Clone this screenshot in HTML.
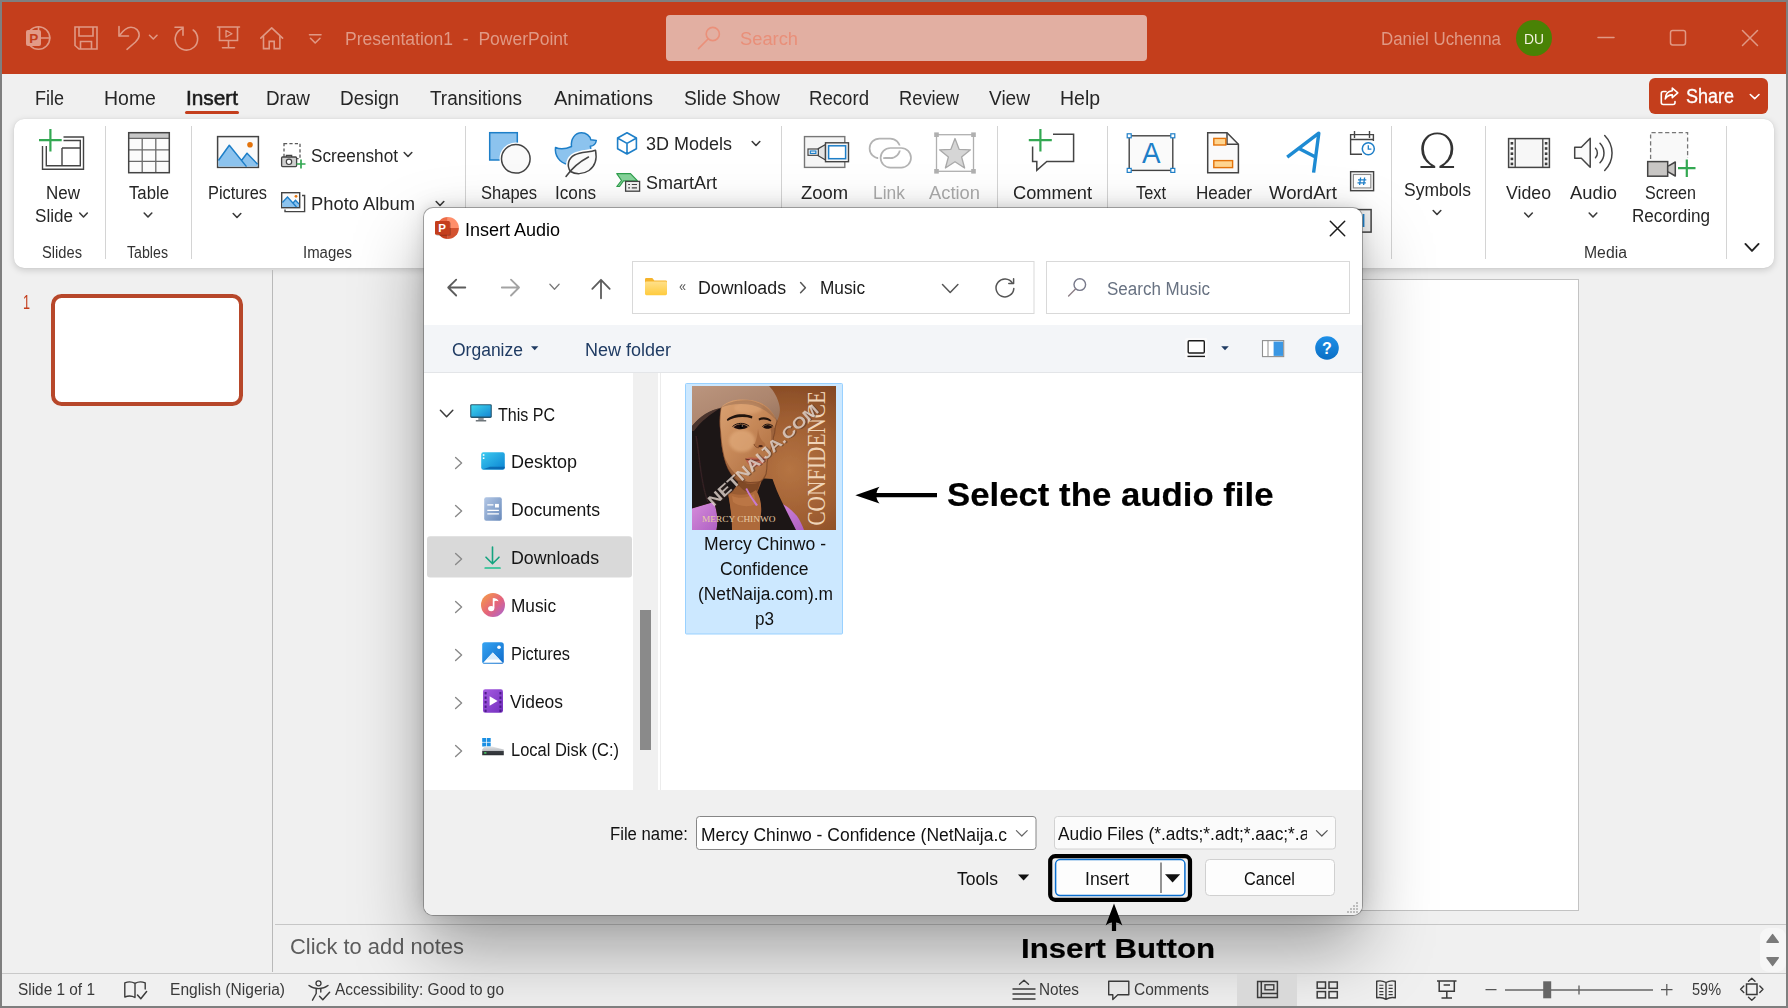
<!DOCTYPE html>
<html lang="en"><head><meta charset="utf-8"><title>Insert Audio - PowerPoint</title>
<style>
html,body{margin:0;padding:0;}
body{width:1788px;height:1008px;overflow:hidden;background:#f0f0f0;font-family:"Liberation Sans",sans-serif;}
#app{position:relative;width:1788px;height:1008px;overflow:hidden;background:#f0f0f0;}
#app div,#app span,#app svg{position:absolute;}
.t{white-space:pre;line-height:1;transform-origin:0 0;display:block;}
svg{overflow:visible;}
.sep{width:1px;background:#d4d4d4;}

</style></head>
<body>
<div id="app">
<div id="titlebar" style="left:0;top:0;width:1788px;height:74px;background:#C43E1C"></div>
<svg id="tb-icons" style="left:0;top:0" width="700" height="74" viewBox="0 0 700 74" fill="none" stroke="#E09985" stroke-width="1.6" stroke-linecap="round" stroke-linejoin="round">
<circle cx="38.5" cy="38" r="11.3"/><path d="M38.5 26.7V38H49.8"/>
<rect x="26" y="30" width="15" height="16" rx="2" fill="#E29A87" stroke="none"/>
<text x="29.3" y="43.2" font-family="Liberation Sans, sans-serif" font-weight="700" font-size="13.5" fill="#C43E1C" stroke="none">P</text>
<path d="M75 27H97V49H79L75 45.5Z M79 27.5V36H93V27.5 M80.5 49V41.5H91.5V49" stroke-linejoin="miter"/>
<path d="M119 26.5V36H128.5" stroke-linejoin="miter"/><path d="M119.5 35.5C123 30.5 127 27.2 131 27.2C136 27.2 139.2 31 139.2 35C139.2 38 137.5 40 135.5 42L127 49.3"/>
<path d="M149.5 35.3L153.3 39L157 35.3"/>
<path d="M175 27.2H183V35.2" stroke-linejoin="miter"/><path d="M182.6 28.4A11.2 11.2 0 1 0 193.2 30"/>
<path d="M217.5 27H239.5 M219.5 27.5V40.5H237.5V27.5 M228.5 40.5V47.5 M222.5 47.8H234.5" stroke-linejoin="miter"/><path d="M226 30.5V37L232 33.7Z" stroke-width="1.3"/>
<path d="M260.8 38.2L271.7 27.8L282.6 38.2"/><path d="M263.5 36.5V48.6H269.2V41.4H274.2V48.6H279.9V36.5" stroke-linejoin="miter"/>
<path d="M309.5 34.7H321 M310.5 38.3L315.2 43L320 38.3"/>
</svg>
<span class="t" style="left:345.00px;top:29.76px;font-size:18px;color:#E09985;transform:scaleX(0.9732);">Presentation1  -  PowerPoint</span>
<div id="search" style="left:666px;top:14.5px;width:481px;height:46.5px;background:#E2AFA2;border-radius:4px"></div>
<svg style="left:690px;top:20px" width="40" height="40" viewBox="690 20 40 40" fill="none" stroke="#EA907A" stroke-width="1.6" stroke-linecap="round"><circle cx="712.8" cy="34" r="6.6"/><path d="M708 39L698.5 48.6"/></svg>
<span class="t" style="left:740.00px;top:29.76px;font-size:18px;color:#E98F79;transform:scaleX(1.0165);">Search</span>
<span class="t" style="left:1381.00px;top:29.76px;font-size:18px;color:#E09985;transform:scaleX(0.9363);">Daniel Uchenna</span>
<div id="avatar" style="left:1516px;top:20px;width:36px;height:36px;border-radius:50%;background:#498205"></div>
<span class="t" style="left:1524.00px;top:30.88px;font-size:15.5px;color:#F3F2E0;transform:scaleX(0.8930);">DU</span>
<svg id="winctl" style="left:1580px;top:0" width="200" height="74" viewBox="1580 0 200 74" fill="none" stroke="#E09985" stroke-width="1.5" stroke-linecap="round">
<path d="M1598 37.5H1614"/><rect x="1670.5" y="30.5" width="15" height="14.5" rx="2.2"/><path d="M1742.5 30.5L1757.5 45.5M1757.5 30.5L1742.5 45.5"/></svg>
<span class="t" style="left:35.00px;top:88.07px;font-size:20px;color:#262626;transform:scaleX(0.9006);">File</span>
<span class="t" style="left:104.00px;top:88.07px;font-size:20px;color:#262626;transform:scaleX(0.9738);">Home</span>
<span class="t" style="left:266.00px;top:88.07px;font-size:20px;color:#262626;transform:scaleX(0.9422);">Draw</span>
<span class="t" style="left:340.00px;top:88.07px;font-size:20px;color:#262626;transform:scaleX(0.9470);">Design</span>
<span class="t" style="left:430.00px;top:88.07px;font-size:20px;color:#262626;transform:scaleX(0.9475);">Transitions</span>
<span class="t" style="left:554.00px;top:88.07px;font-size:20px;color:#262626;transform:scaleX(1.0010);">Animations</span>
<span class="t" style="left:684.00px;top:88.07px;font-size:20px;color:#262626;transform:scaleX(0.9590);">Slide Show</span>
<span class="t" style="left:809.00px;top:88.07px;font-size:20px;color:#262626;transform:scaleX(0.9302);">Record</span>
<span class="t" style="left:899.00px;top:88.07px;font-size:20px;color:#262626;transform:scaleX(0.9146);">Review</span>
<span class="t" style="left:989.00px;top:88.07px;font-size:20px;color:#262626;transform:scaleX(0.9535);">View</span>
<span class="t" style="left:1060.00px;top:88.07px;font-size:20px;color:#262626;transform:scaleX(0.9732);">Help</span>
<span class="t" style="left:186.00px;top:88.07px;font-size:20px;color:#1a1a1a;transform:scaleX(1.0400);-webkit-text-stroke:0.55px #1a1a1a;">Insert</span>
<div style="left:185px;top:110.5px;width:54px;height:3px;border-radius:1.5px;background:#C43E1C"></div>
<div id="share" style="left:1649px;top:78px;width:119px;height:36px;border-radius:6px;background:#C43E1C"></div>
<svg style="left:1655px;top:82px" width="30" height="30" viewBox="1655 82 30 30" fill="none" stroke="#fff" stroke-width="1.6" stroke-linecap="round" stroke-linejoin="round">
<path d="M1666 91.5H1663.3A2 2 0 0 0 1661.3 93.5V102.5A2 2 0 0 0 1663.3 104.5H1673A2 2 0 0 0 1675 102.5V101.5"/>
<path d="M1672.3 88L1677.8 92.8L1672.3 97.6V94.9C1668.6 94.9 1666.6 96.3 1665.3 99C1665.5 94.2 1668.3 91 1672.3 90.7Z"/></svg>
<span class="t" style="left:1686.00px;top:86.07px;font-size:20px;color:#ffffff;transform:scaleX(0.8989);-webkit-text-stroke:0.3px #fff;">Share</span>
<svg style="left:1748px;top:92px" width="14" height="10" viewBox="1748 92 14 10" fill="none" stroke="#fff" stroke-width="1.6" stroke-linecap="round" stroke-linejoin="round"><path d="M1750.3 94.5L1754.7 98.7L1759 94.5"/></svg>
<div id="ribbon" style="left:14px;top:118.5px;width:1760px;height:149.5px;border-radius:10px;background:#fff;box-shadow:0 2px 7px rgba(0,0,0,.17),0 0 1px rgba(0,0,0,.12)"></div>
<div style="left:272px;top:270px;width:1px;height:702px;background:#b9b9b9"></div>
<span class="t" style="left:22.50px;top:293.49px;font-size:19.5px;color:#C43E1C;transform:scaleX(0.6468);">1</span>
<div id="thumb" style="left:51px;top:293.5px;width:192px;height:112px;box-sizing:border-box;border:4.2px solid #B7472A;border-radius:10.5px;background:#fff"></div>
<div id="slide" style="left:456px;top:280px;width:1122px;height:630px;background:#fff;outline:1px solid #c3c3c3"></div>
<div style="left:275px;top:924px;width:1511px;height:1px;background:#c6c6c6"></div>
<span class="t" style="left:290.00px;top:936.38px;font-size:22px;color:#5d5d5d;transform:scaleX(0.9949);">Click to add notes</span>
<div style="left:1760px;top:928px;width:26px;height:44px;border-radius:9px;background:#f6f6f6"></div>
<svg style="left:1760px;top:928px" width="26" height="44" viewBox="1760 928 26 44" fill="#7a7a7a" stroke="#7a7a7a" stroke-width="1.5" stroke-linejoin="round"><path d="M1767 942.3L1772.6 934.6L1778.2 942.3Z"/><path d="M1767 957.7L1772.6 965.4L1778.2 957.7Z"/></svg>
<div class="sep" style="left:105px;top:126px;height:133px"></div>
<div class="sep" style="left:191px;top:126px;height:133px"></div>
<div class="sep" style="left:465px;top:126px;height:133px"></div>
<div class="sep" style="left:781px;top:126px;height:133px"></div>
<div class="sep" style="left:997px;top:126px;height:133px"></div>
<div class="sep" style="left:1107px;top:126px;height:133px"></div>
<div class="sep" style="left:1391px;top:126px;height:133px"></div>
<div class="sep" style="left:1485px;top:126px;height:133px"></div>
<div class="sep" style="left:1726px;top:126px;height:133px"></div>
<span class="t" style="left:46.00px;top:183.76px;font-size:18px;color:#262626;transform:scaleX(0.9421);">New</span>
<span class="t" style="left:35.00px;top:206.76px;font-size:18px;color:#262626;transform:scaleX(0.9488);">Slide</span>
<span class="t" style="left:129.00px;top:183.76px;font-size:18px;color:#262626;transform:scaleX(0.9298);">Table</span>
<span class="t" style="left:208.00px;top:183.76px;font-size:18px;color:#262626;transform:scaleX(0.9080);">Pictures</span>
<span class="t" style="left:311.00px;top:146.76px;font-size:18px;color:#262626;transform:scaleX(0.9552);">Screenshot</span>
<span class="t" style="left:311.00px;top:194.76px;font-size:18px;color:#262626;transform:scaleX(1.0190);">Photo Album</span>
<span class="t" style="left:481.00px;top:183.76px;font-size:18px;color:#262626;transform:scaleX(0.9177);">Shapes</span>
<span class="t" style="left:555.00px;top:183.76px;font-size:18px;color:#262626;transform:scaleX(0.9530);">Icons</span>
<span class="t" style="left:646.00px;top:134.76px;font-size:18px;color:#262626;transform:scaleX(0.9995);">3D Models</span>
<span class="t" style="left:646.00px;top:173.76px;font-size:18px;color:#262626;transform:scaleX(0.9999);">SmartArt</span>
<span class="t" style="left:801.00px;top:183.76px;font-size:18px;color:#262626;transform:scaleX(1.0220);">Zoom</span>
<span class="t" style="left:1013.00px;top:183.76px;font-size:18px;color:#262626;transform:scaleX(1.0124);">Comment</span>
<span class="t" style="left:1136.00px;top:183.76px;font-size:18px;color:#262626;transform:scaleX(0.9083);">Text</span>
<span class="t" style="left:1196.00px;top:183.76px;font-size:18px;color:#262626;transform:scaleX(0.9485);">Header</span>
<span class="t" style="left:1269.00px;top:183.76px;font-size:18px;color:#262626;transform:scaleX(1.0350);">WordArt</span>
<span class="t" style="left:1404.00px;top:180.76px;font-size:18px;color:#262626;transform:scaleX(0.9706);">Symbols</span>
<span class="t" style="left:1506.00px;top:183.76px;font-size:18px;color:#262626;transform:scaleX(0.9843);">Video</span>
<span class="t" style="left:1570.00px;top:183.76px;font-size:18px;color:#262626;transform:scaleX(1.0200);">Audio</span>
<span class="t" style="left:1645.00px;top:183.76px;font-size:18px;color:#262626;transform:scaleX(0.8938);">Screen</span>
<span class="t" style="left:1632.00px;top:206.76px;font-size:18px;color:#262626;transform:scaleX(0.9503);">Recording</span>
<span class="t" style="left:873.00px;top:183.76px;font-size:18px;color:#ababab;transform:scaleX(0.9662);">Link</span>
<span class="t" style="left:929.00px;top:183.76px;font-size:18px;color:#ababab;transform:scaleX(1.0192);">Action</span>
<span class="t" style="left:42.00px;top:245.46px;font-size:16px;color:#333;transform:scaleX(0.9174);">Slides</span>
<span class="t" style="left:127.00px;top:245.46px;font-size:16px;color:#333;transform:scaleX(0.8867);">Tables</span>
<span class="t" style="left:303.00px;top:245.46px;font-size:16px;color:#333;transform:scaleX(0.9337);">Images</span>
<span class="t" style="left:1584.00px;top:245.46px;font-size:16px;color:#333;transform:scaleX(0.9844);">Media</span>
<svg id="ribbon-icons" style="left:0;top:0" width="1788" height="280" viewBox="0 0 1788 280"><path d="M79.7 213.0L83.5 217.0L87.3 213.0" stroke="#3b3b3b" stroke-width="1.6" fill="none" stroke-linecap="round" stroke-linejoin="round"/>
<path d="M144.2 213.0L148 217.0L151.8 213.0" stroke="#3b3b3b" stroke-width="1.6" fill="none" stroke-linecap="round" stroke-linejoin="round"/>
<path d="M233.2 213.5L237 217.5L240.8 213.5" stroke="#3b3b3b" stroke-width="1.6" fill="none" stroke-linecap="round" stroke-linejoin="round"/>
<path d="M404.2 152.5L408 156.5L411.8 152.5" stroke="#3b3b3b" stroke-width="1.6" fill="none" stroke-linecap="round" stroke-linejoin="round"/>
<path d="M436.2 201.5L440 205.5L443.8 201.5" stroke="#3b3b3b" stroke-width="1.6" fill="none" stroke-linecap="round" stroke-linejoin="round"/>
<path d="M752.2 141.5L756 145.5L759.8 141.5" stroke="#3b3b3b" stroke-width="1.6" fill="none" stroke-linecap="round" stroke-linejoin="round"/>
<path d="M1433.2 210.5L1437 214.5L1440.8 210.5" stroke="#3b3b3b" stroke-width="1.6" fill="none" stroke-linecap="round" stroke-linejoin="round"/>
<path d="M1524.7 213.0L1528.5 217.0L1532.3 213.0" stroke="#3b3b3b" stroke-width="1.6" fill="none" stroke-linecap="round" stroke-linejoin="round"/>
<path d="M1589.2 213.0L1593 217.0L1596.8 213.0" stroke="#3b3b3b" stroke-width="1.6" fill="none" stroke-linecap="round" stroke-linejoin="round"/>
<path d="M1745.4 243.9L1752 250.9L1758.6 243.9" stroke="#222" stroke-width="1.9" fill="none" stroke-linecap="round" stroke-linejoin="round"/>
<path d="M63.5 137H83.5V169.3H42.5V146" stroke="#444" stroke-width="1.4" fill="none"/><path d="M63.5 140.5H80.3V165.8H46.3V146 M62 148H80.3 M62 148V165.8" stroke="#444" stroke-width="1.4" fill="none"/><path d="M50.4 129V151.6M39 140.2H61.7" stroke="#33A852" stroke-width="2.2" fill="none"/>
<rect x="128.7" y="132.7" width="40.6" height="40" fill="#fbfbfb" stroke="none"/><rect x="128.7" y="132.7" width="40.6" height="5.6" fill="#c8c8c8"/><path d="M128.7 138.3H169.3M128.7 149.8H169.3M128.7 161.3H169.3M142.2 138.3V172.7M155.8 138.3V172.7" stroke="#6a6a6a" stroke-width="1.3" fill="none"/><rect x="128.7" y="132.7" width="40.6" height="40" fill="none" stroke="#444" stroke-width="1.5"/>
<rect x="217.6" y="136.6" width="40.8" height="30.8" fill="#fafafa" stroke="#444" stroke-width="1.5"/><path d="M218.4 166.6V160.5L229.3 145.3L241.5 160.5L247 153.2L257.6 164.2V166.6Z" fill="#8CC3EE" stroke="none"/><path d="M218.4 160.5L229.3 145.3L246.5 166.6M241.7 160.2L247 153.2L257.6 164.2" fill="none" stroke="#1E7FC8" stroke-width="1.5" stroke-linejoin="round"/><circle cx="250" cy="144.7" r="2.8" fill="#E3730B"/>
<rect x="284" y="143.6" width="16" height="15" fill="none" stroke="#5a5a5a" stroke-width="1.3" stroke-dasharray="3.2 2.2"/><path d="M286.3 157V155.3H291.7V157" fill="#cfcfcf" stroke="#444" stroke-width="1.2"/><rect x="281.6" y="157" width="15" height="9.6" rx="1" fill="#cfcfcf" stroke="#444" stroke-width="1.3"/><circle cx="289" cy="161.8" r="2.7" fill="#fff" stroke="#444" stroke-width="1.2"/><path d="M301 159.5V168.5M296.5 164H305.5" stroke="#33A852" stroke-width="1.7" fill="none"/>
<path d="M302 195.5H304.6V211.6H285V209.5" fill="none" stroke="#444" stroke-width="1.4"/><rect x="281.7" y="192.7" width="18" height="15" fill="#fafafa" stroke="#444" stroke-width="1.4"/><path d="M282.4 207V202.5L287.5 197L293 203L295.5 200.3L299 204V207Z" fill="#8CC3EE"/><path d="M282.4 202.5L287.5 197L296.5 207M293 203L295.5 200.3L299 204" fill="none" stroke="#1E7FC8" stroke-width="1.3"/><circle cx="296" cy="196.3" r="1.4" fill="#E3730B"/>
<rect x="489.7" y="132.7" width="27.6" height="27.3" fill="#8CC3EE" stroke="#1E7FC8" stroke-width="1.5"/><circle cx="515.8" cy="158.8" r="16.3" fill="#fff"/><circle cx="515.8" cy="158.8" r="14.3" fill="#fafafa" stroke="#444" stroke-width="1.5"/>
<path d="M555.5 147.5C560 149.5 566 149 571.5 146.5C570.5 139 575 132.8 581.5 132.8C586.5 132.8 590 136 590.8 139.8L596.3 140.5C595.8 144 593 146 590.3 146.3C591.5 150 591.5 154 589 158C585 164.5 576 166 568 164.5C559 162.5 554.5 155 555.5 147.5Z" fill="#8CC3EE" stroke="#1E7FC8" stroke-width="1.5" stroke-linejoin="round"/><path d="M570.5 171.5C566.5 166 568 158.5 574.5 155C581 151.5 589 152.5 595.5 150.2C597 158 595.5 166 589 170.5C583 174.5 575.5 174.5 570.5 171.5Z" fill="#fafafa" stroke="#fff" stroke-width="4.5"/><path d="M570.5 171.5C566.5 166 568 158.5 574.5 155C581 151.5 589 152.5 595.5 150.2C597 158 595.5 166 589 170.5C583 174.5 575.5 174.5 570.5 171.5Z" fill="#fafafa" stroke="#444" stroke-width="1.5" stroke-linejoin="round"/><path d="M566 176.5C571 169.5 579 162 588.5 157" fill="none" stroke="#444" stroke-width="1.5" stroke-linecap="round"/>
<path d="M627 132.7L636.4 138V148.7L627 154L617.6 148.7V138Z M617.9 138.2L627 143.4L636.1 138.2M627 143.4V153.7" fill="none" stroke="#1E7FC8" stroke-width="1.6" stroke-linejoin="round"/>
<path d="M616.8 173.6H630.5L637.5 180.8H623.5L619.5 186.5L616.8 186.5L621.5 180.5Z" fill="#86D39A" stroke="#2F9E4D" stroke-width="1.2" stroke-linejoin="round"/><rect x="625.6" y="181.4" width="14" height="9.8" fill="#f1f1f1" stroke="#444" stroke-width="1.3"/><path d="M628.2 184.5H630M631.8 184.5H637M628.2 187.8H630M631.8 187.8H637" stroke="#444" stroke-width="1.2"/>
<rect x="804.5" y="136.6" width="40.3" height="30.8" fill="#f5f5f5" stroke="#777" stroke-width="1.4"/><path d="M818.3 148.6L825.5 144.5V160L818.3 155.8Z" fill="#e4e4e4" stroke="#444" stroke-width="1.3" stroke-linejoin="round"/><rect x="808" y="149" width="10.3" height="6.3" fill="#fff" stroke="#444" stroke-width="1.2"/><rect x="810.3" y="151" width="5.6" height="2.4" fill="#fff" stroke="#1E7FC8" stroke-width="1.2"/><rect x="825.5" y="142.8" width="23" height="18.9" fill="#f5f5f5" stroke="#444" stroke-width="1.4"/><rect x="828.6" y="145.8" width="17" height="12.9" fill="#fff" stroke="#1E7FC8" stroke-width="1.5"/>
<rect x="869.6" y="138.6" width="30.4" height="19.6" rx="9.8" fill="none" stroke="#b3b3b3" stroke-width="1.7"/><rect x="880.6" y="148" width="30.4" height="19.6" rx="9.8" fill="none" stroke="#fff" stroke-width="5"/><rect x="880.6" y="148" width="30.4" height="19.6" rx="9.8" fill="none" stroke="#b3b3b3" stroke-width="1.7"/><path d="M884.5 157.8H890.5" stroke="#b3b3b3" stroke-width="1.5"/>
<rect x="936.5" y="134.7" width="37" height="36.6" fill="none" stroke="#b0b0b0" stroke-width="1.3"/><rect x="934.2" y="132.4" width="4.6" height="4.6" fill="#b0b0b0"/><rect x="934.2" y="169" width="4.6" height="4.6" fill="#b0b0b0"/><rect x="971.2" y="132.4" width="4.6" height="4.6" fill="#b0b0b0"/><rect x="971.2" y="169" width="4.6" height="4.6" fill="#b0b0b0"/><path d="M955 138.5L959.1 149.3L970.5 149.8L961.6 157L964.6 168L955 161.7L945.4 168L948.4 157L939.5 149.8L950.9 149.3Z" fill="#d6d6d6" stroke="#a9a9a9" stroke-width="1.3" stroke-linejoin="round"/>
<path d="M1053 134.2H1073.6V161.5H1046.8L1036.8 170.3V161.5H1032.6V146.5" fill="none" stroke="#444" stroke-width="1.5" stroke-linejoin="miter"/><path d="M1040.4 129V151.5M1028.8 140.2H1051.8" stroke="#33A852" stroke-width="2.2" fill="none"/>
<rect x="1129.2" y="135.8" width="43.6" height="34.6" fill="#fafafa" stroke="#444" stroke-width="1.4"/><rect x="1127.2" y="133.8" width="4" height="4" fill="#fff" stroke="#1E7FC8" stroke-width="1.2"/><rect x="1127.2" y="168.4" width="4" height="4" fill="#fff" stroke="#1E7FC8" stroke-width="1.2"/><rect x="1170.8" y="133.8" width="4" height="4" fill="#fff" stroke="#1E7FC8" stroke-width="1.2"/><rect x="1170.8" y="168.4" width="4" height="4" fill="#fff" stroke="#1E7FC8" stroke-width="1.2"/><text x="1151.2" y="163.4" text-anchor="middle" font-family="Liberation Sans, sans-serif" font-size="29" fill="#1E7FC8" textLength="18.5" lengthAdjust="spacingAndGlyphs">A</text>
<path d="M1207.7 132.8H1227L1238.4 144.2V172.8H1207.7Z" fill="#fafafa" stroke="#444" stroke-width="1.5" stroke-linejoin="miter"/><path d="M1227 132.8V144.2H1238.4" fill="none" stroke="#444" stroke-width="1.5"/><rect x="1213.8" y="138.4" width="12" height="6.6" fill="#FFD590" stroke="#E3730B" stroke-width="1.4"/><rect x="1213.8" y="160.6" width="18.8" height="7" fill="#FFD590" stroke="#E3730B" stroke-width="1.4"/>
<path d="M1287.2 157.2L1318.8 133.2L1313.6 172.6M1298.5 148.3L1315.5 157" fill="none" stroke="#1E8BD3" stroke-width="3.4" stroke-linejoin="round" stroke-linecap="butt"/>
<path d="M1362 154.3H1350.6V134.6H1373.4V141 M1354.5 131V138M1369.5 131V138 M1350.6 139.5H1373.4" fill="none" stroke="#444" stroke-width="1.4"/><circle cx="1368.3" cy="148.8" r="6" fill="#fff" stroke="#1E7FC8" stroke-width="1.5"/><path d="M1368.3 145.3V149.2H1371.4" fill="none" stroke="#1E7FC8" stroke-width="1.3"/>
<rect x="1350.6" y="171.7" width="23" height="19" fill="#f3f3f3" stroke="#444" stroke-width="1.4"/><rect x="1353.4" y="174.5" width="17.4" height="13.4" fill="#fff" stroke="#8a8a8a" stroke-width="1.1"/><path d="M1360.6 177.5L1359.6 185M1364.6 177.5L1363.6 185M1358 179.8H1366.3M1357.5 182.8H1365.8" stroke="#1E7FC8" stroke-width="1.3" fill="none"/>
<rect x="1350.6" y="209.6" width="20.5" height="22.5" fill="#f3f3f3" stroke="#444" stroke-width="1.5"/><path d="M1363.5 214V227" stroke="#1E7FC8" stroke-width="1.8"/>
<text x="1437.2" y="167.6" text-anchor="middle" font-family="DejaVu Sans, Liberation Sans, sans-serif" font-weight="200" font-size="48" fill="#333" textLength="39.5" lengthAdjust="spacingAndGlyphs">Ω</text>
<rect x="1508.6" y="138.6" width="40.8" height="28.8" fill="#f7f7f7" stroke="#444" stroke-width="1.5"/><path d="M1515.2 138.6V167.4M1542.8 138.6V167.4" stroke="#444" stroke-width="1.3"/><rect x="1510.6" y="142" width="2.6" height="2.6" fill="#3d3d3d"/><rect x="1510.6" y="147.2" width="2.6" height="2.6" fill="#3d3d3d"/><rect x="1510.6" y="152.4" width="2.6" height="2.6" fill="#3d3d3d"/><rect x="1510.6" y="157.6" width="2.6" height="2.6" fill="#3d3d3d"/><rect x="1510.6" y="162.6" width="2.6" height="2.6" fill="#3d3d3d"/><rect x="1544.8" y="142" width="2.6" height="2.6" fill="#3d3d3d"/><rect x="1544.8" y="147.2" width="2.6" height="2.6" fill="#3d3d3d"/><rect x="1544.8" y="152.4" width="2.6" height="2.6" fill="#3d3d3d"/><rect x="1544.8" y="157.6" width="2.6" height="2.6" fill="#3d3d3d"/><rect x="1544.8" y="162.6" width="2.6" height="2.6" fill="#3d3d3d"/>
<path d="M1574.7 147.3H1581.3L1590.2 138.2V167.2L1581.3 158.3H1574.7Z" fill="#fafafa" stroke="#444" stroke-width="1.5" stroke-linejoin="round"/><path d="M1595.5 148.3C1598 150.8 1598 155.2 1595.5 157.7 M1600 143.2C1605.3 148.8 1605.3 157.2 1600 162.8 M1604.7 135.5C1614.5 145.5 1614.5 160.5 1604.7 170.5" fill="none" stroke="#444" stroke-width="1.5" stroke-linecap="round"/>
<rect x="1650.6" y="132.7" width="37" height="30" fill="#f9f9f9" stroke="none"/><path d="M1650.6 159V132.7H1687.6V158" fill="none" stroke="#777" stroke-width="1.3" stroke-dasharray="4.2 2.6"/><rect x="1647.7" y="161.6" width="20" height="14.6" fill="#c8c6c4" stroke="#444" stroke-width="1.5"/><path d="M1667.7 166.3L1675.3 162V176L1667.7 171.7Z" fill="#c8c6c4" stroke="#444" stroke-width="1.5" stroke-linejoin="round"/><path d="M1686.8 159.5V177M1678 168.2H1695.5" stroke="#33A852" stroke-width="2.2" fill="none"/></svg>
<div id="dialog" style="left:424px;top:207.5px;width:938px;height:707px;border-radius:9px;background:#fff;overflow:hidden;
box-shadow:0 0 0 1px rgba(90,90,90,.5),0 34px 70px rgba(0,0,0,.34),0 0 24px rgba(0,0,0,.12),0 -3px 10px rgba(0,0,0,.06)">
<div style="left:0;top:117.5px;width:938px;height:47px;background:#F3F5F8;border-bottom:1px solid #E3E5E8"></div>
<div style="left:209px;top:165.5px;width:24.5px;height:417px;background:#F0F0F0"></div>
<div style="left:235.5px;top:165.5px;width:1px;height:417px;background:#ECECEC"></div>
<div style="left:0;top:582px;width:938px;height:125px;background:#F0F0F0"></div>
</div>
<svg id="dlg-art" style="left:0;top:0" width="1788" height="1008" viewBox="0 0 1788 1008"><defs></defs><clipPath id="ppc"><circle cx="447.8" cy="228" r="11.1"/></clipPath><g clip-path="url(#ppc)"><rect x="436" y="216" width="11.8" height="12" fill="#ED6C47"/><rect x="447.8" y="216" width="12" height="12" fill="#FF8F6B"/><rect x="447.8" y="228" width="12" height="12" fill="#D35230"/><rect x="436" y="228" width="11.8" height="12" fill="#C43E1C"/></g><rect x="436.2" y="222.2" width="14.6" height="13.6" rx="1.3" fill="#000" opacity=".22"/><rect x="435" y="221" width="14.8" height="13.8" rx="1.3" fill="#C43E1C"/><text x="438.3" y="232.3" font-family="Liberation Sans, sans-serif" font-weight="700" font-size="11.5" fill="#fff">P</text>
<path d="M1330.3 221.3L1344.7 235.7M1344.7 221.3L1330.3 235.7" stroke="#1b1b1b" stroke-width="1.5" stroke-linecap="round"/>
<path d="M465.3 287.5H448.3M456.2 279.6L448.2 287.5L456.2 295.5" fill="none" stroke="#5c5c5c" stroke-width="1.8" stroke-linecap="round" stroke-linejoin="round"/>
<path d="M501.8 287.5H518.8M511 279.6L519 287.5L511 295.5" fill="none" stroke="#a3a3a3" stroke-width="1.8" stroke-linecap="round" stroke-linejoin="round"/>
<path d="M549.9 284.3L554.5 289.2L559.1 284.3" fill="none" stroke="#7a7a7a" stroke-width="1.3" stroke-linecap="round" stroke-linejoin="round"/>
<path d="M601 298.3V280M592.3 288.8L601 279.8L609.7 288.8" fill="none" stroke="#5c5c5c" stroke-width="1.8" stroke-linecap="round" stroke-linejoin="round"/>
<rect x="632.5" y="261.5" width="401.5" height="52" fill="#fff" stroke="#D9D9D9" stroke-width="1"/>
<rect x="1046.5" y="261.5" width="303" height="52" fill="#fff" stroke="#D9D9D9" stroke-width="1"/>
<linearGradient id="fg" x1="0" y1="0" x2="0" y2="1"><stop offset="0" stop-color="#FFE08A"/><stop offset="1" stop-color="#FFCB3D"/></linearGradient><path d="M645 279.3A1.3 1.3 0 0 1 646.3 278H652.3L654.3 280.5H665.7A1.3 1.3 0 0 1 667 281.8V284H645Z" fill="#F5B32B"/><rect x="645" y="281.6" width="22" height="13.6" rx="1.4" fill="url(#fg)"/>
<path d="M800.6 282.6L805.4 287.7L800.6 292.8" fill="none" stroke="#555" stroke-width="1.5" stroke-linecap="round" stroke-linejoin="round"/>
<path d="M942.5 284.5L950.2 292.5L957.9 284.5" fill="none" stroke="#555" stroke-width="1.5" stroke-linecap="round" stroke-linejoin="round"/>
<path d="M1013.8 288.6A8.9 8.9 0 1 1 1012.4 283.1" fill="none" stroke="#555" stroke-width="1.5" stroke-linecap="round"/><path d="M1013.6 278.8V283.4H1008.8" fill="none" stroke="#555" stroke-width="1.5" stroke-linecap="round" stroke-linejoin="round"/>
<circle cx="1079.8" cy="284.6" r="5.8" fill="none" stroke="#77798a" stroke-width="1.4"/><path d="M1075.5 289L1068.6 295.9" stroke="#8c7f86" stroke-width="1.4" stroke-linecap="round"/>
<path d="M531 346.2H538.4L534.7 350.3Z" fill="#1F3B63"/>
<rect x="1185" y="338" width="22.5" height="21.5" rx="2" fill="#FAFAFB"/><rect x="1188.2" y="340.7" width="16.1" height="12.3" rx="1" fill="#fff" stroke="#1b1b1b" stroke-width="1.4"/><path d="M1187.5 356.4H1205" stroke="#1b1b1b" stroke-width="1.4"/>
<path d="M1221.2 346.2H1228.8L1225 350.3Z" fill="#1F3B63"/>
<rect x="1262.5" y="340.6" width="21.2" height="16" fill="#fff" stroke="#8f8f8f" stroke-width="1.1"/><path d="M1268 340.6V356.6" stroke="#8f8f8f" stroke-width="1"/><rect x="1273.6" y="341.6" width="9.4" height="14.3" fill="#3B97E3"/>
<linearGradient id="hg" x1="0" y1="0" x2="0" y2="1"><stop offset="0" stop-color="#1E90E8"/><stop offset="1" stop-color="#0A6EC4"/></linearGradient><circle cx="1327" cy="348" r="11.8" fill="url(#hg)"/><text x="1327" y="353.8" text-anchor="middle" font-family="Liberation Sans, sans-serif" font-weight="700" font-size="16" fill="#fff">?</text>
<rect x="427" y="536.3" width="205" height="41.2" rx="3" fill="#D9D9D9"/>
<path d="M440.4 410.2L446.6 416.8L452.8 410.2" fill="none" stroke="#3c3c3c" stroke-width="1.5" stroke-linecap="round" stroke-linejoin="round"/>
<path d="M455.6 457.4L461.6 463L455.6 468.6" fill="none" stroke="#8a8a8a" stroke-width="1.4" stroke-linecap="round" stroke-linejoin="round"/>
<path d="M455.6 505.4L461.6 511L455.6 516.6" fill="none" stroke="#8a8a8a" stroke-width="1.4" stroke-linecap="round" stroke-linejoin="round"/>
<path d="M455.6 553.4L461.6 559L455.6 564.6" fill="none" stroke="#8a8a8a" stroke-width="1.4" stroke-linecap="round" stroke-linejoin="round"/>
<path d="M455.6 601.4L461.6 607L455.6 612.6" fill="none" stroke="#8a8a8a" stroke-width="1.4" stroke-linecap="round" stroke-linejoin="round"/>
<path d="M455.6 649.4L461.6 655L455.6 660.6" fill="none" stroke="#8a8a8a" stroke-width="1.4" stroke-linecap="round" stroke-linejoin="round"/>
<path d="M455.6 697.4L461.6 703L455.6 708.6" fill="none" stroke="#8a8a8a" stroke-width="1.4" stroke-linecap="round" stroke-linejoin="round"/>
<path d="M455.6 745.4L461.6 751L455.6 756.6" fill="none" stroke="#8a8a8a" stroke-width="1.4" stroke-linecap="round" stroke-linejoin="round"/>
<rect x="640" y="610" width="11" height="140" fill="#8A8A8A"/>
<linearGradient id="pcg" x1="0" y1="0" x2="1" y2="1"><stop offset="0" stop-color="#3DD6EC"/><stop offset="1" stop-color="#1487D4"/></linearGradient><rect x="470.2" y="404.2" width="21.6" height="13.8" rx="1.4" fill="#24566f"/><rect x="471.3" y="405.2" width="19.4" height="11.4" rx=".6" fill="url(#pcg)"/><rect x="478.3" y="418" width="5.4" height="2.4" fill="#8d9499"/><rect x="475.8" y="420" width="10.4" height="1.5" fill="#6f767b"/>
<linearGradient id="dkg" x1="0" y1="0" x2="1" y2="1"><stop offset="0" stop-color="#3CCBF0"/><stop offset="1" stop-color="#0B83D2"/></linearGradient><rect x="481.2" y="452.3" width="23.6" height="17.4" rx="2.2" fill="url(#dkg)"/><rect x="482.8" y="454.2" width="1.6" height="1.6" fill="#fff"/><rect x="482.8" y="457.4" width="1.6" height="1.6" fill="#fff"/><path d="M483 469.2H503.2A2 2 0 0 0 504.8 467.5V466.8H490Z" fill="#075fa8" opacity=".75"/>
<linearGradient id="dcg" x1="0" y1="0" x2="1" y2="1"><stop offset="0" stop-color="#B4C8E6"/><stop offset="1" stop-color="#6789BA"/></linearGradient><rect x="484.2" y="497.2" width="17.6" height="23.6" rx="2" fill="url(#dcg)"/><path d="M487.3 504.9H493.4M487.3 510.3H498.9M487.3 513.8H498.9" stroke="#fff" stroke-width="1.2"/><rect x="495" y="503.9" width="3.9" height="3.6" fill="#fff"/>
<path d="M492.5 547V563.3M486 557.2L492.5 563.8L499 557.2" fill="none" stroke="#14A37F" stroke-width="1.6" stroke-linecap="round" stroke-linejoin="round"/><path d="M485.2 568H500" stroke="#1DBF8E" stroke-width="1.7" stroke-linecap="round"/>
<linearGradient id="mug" x1="0" y1="0" x2="1" y2="1"><stop offset="0" stop-color="#F7A142"/><stop offset=".55" stop-color="#E4637C"/><stop offset="1" stop-color="#A567D8"/></linearGradient><circle cx="493" cy="605" r="12" fill="url(#mug)"/><path d="M493.6 598.2V608.2" stroke="#fff" stroke-width="1.7"/><path d="M493.6 598.2C495.5 598 498 598.8 498.6 601.3C497 600.6 495.2 600.6 493.6 601.4Z" fill="#fff"/><ellipse cx="491.2" cy="608.6" rx="3.1" ry="2.6" fill="#fff"/>
<linearGradient id="pig" x1="0" y1="0" x2="1" y2="1"><stop offset="0" stop-color="#35A4F2"/><stop offset="1" stop-color="#0F6CCB"/></linearGradient><rect x="482.2" y="642.2" width="21.6" height="21.6" rx="2.6" fill="url(#pig)"/><path d="M483.2 662.8L492.8 652.5L502.8 662.8Z" fill="#fff"/><path d="M486.4 659.5L492.8 652.5L499.4 659.5Z" fill="#d9ecfb"/><circle cx="499" cy="647.2" r="1.8" fill="#fff"/>
<linearGradient id="vig" x1="0" y1="0" x2="1" y2="1"><stop offset="0" stop-color="#A55BE0"/><stop offset="1" stop-color="#7430BF"/></linearGradient><rect x="483" y="689.3" width="20" height="23.4" rx="2.2" fill="url(#vig)"/><rect x="484.6" y="692" width="2" height="2.4" fill="#4d1b8a"/><rect x="484.6" y="696.5" width="2" height="2.4" fill="#4d1b8a"/><rect x="484.6" y="701" width="2" height="2.4" fill="#4d1b8a"/><rect x="484.6" y="705.5" width="2" height="2.4" fill="#4d1b8a"/><rect x="484.6" y="709.6" width="2" height="2.4" fill="#4d1b8a"/><rect x="499.4" y="692" width="2" height="2.4" fill="#4d1b8a"/><rect x="499.4" y="696.5" width="2" height="2.4" fill="#4d1b8a"/><rect x="499.4" y="701" width="2" height="2.4" fill="#4d1b8a"/><rect x="499.4" y="705.5" width="2" height="2.4" fill="#4d1b8a"/><rect x="499.4" y="709.6" width="2" height="2.4" fill="#4d1b8a"/><path d="M489.6 696.3V705.7L497.6 701Z" fill="#fff"/>
<rect x="482.2" y="738" width="3.9" height="3.9" fill="#1A8FE3"/><rect x="482.2" y="742.6" width="3.9" height="3.9" fill="#1A8FE3"/><rect x="486.8" y="738" width="3.9" height="3.9" fill="#1A8FE3"/><rect x="486.8" y="742.6" width="3.9" height="3.9" fill="#1A8FE3"/><linearGradient id="ldg" x1="0" y1="0" x2="0" y2="1"><stop offset="0" stop-color="#e4e6e8"/><stop offset=".5" stop-color="#b9bcc0"/><stop offset=".52" stop-color="#3b3f44"/><stop offset="1" stop-color="#2b2e32"/></linearGradient><path d="M484.5 746.5H492L503.8 749.5V755.3H482.2V749.5Z" fill="url(#ldg)"/><rect x="484.2" y="752.2" width="2.2" height="1.4" fill="#4BE06A"/>
<rect x="685.5" y="383.5" width="157" height="250.5" rx="1" fill="#CCE8FF" stroke="#99D1FF" stroke-width="1"/>
<rect x="696.5" y="816.5" width="339.5" height="33" rx="3" fill="#fff" stroke="#868686" stroke-width="1"/>
<path d="M1016.4 830.6L1021.8 836L1027.2 830.6" fill="none" stroke="#666" stroke-width="1.2" stroke-linecap="round" stroke-linejoin="round"/>
<rect x="1054.5" y="816.5" width="281" height="32.5" rx="3" fill="#FBFBFB" stroke="#D2D2D2" stroke-width="1"/>
<path d="M1316.4 830.6L1321.8 836L1327.2 830.6" fill="none" stroke="#555" stroke-width="1.2" stroke-linecap="round" stroke-linejoin="round"/>
<path d="M1018 874.5H1029.2L1023.6 880.6Z" fill="#111"/>
<rect x="1205.5" y="859.5" width="129" height="36" rx="4" fill="#FDFDFD" stroke="#D0D0D0" stroke-width="1"/>
<rect x="1055.6" y="859.6" width="129.3" height="36" rx="4.5" fill="#FDFDFD" stroke="#0B6FD0" stroke-width="1.5"/>
<path d="M1161 862.5V893" stroke="#4d4d4d" stroke-width="1.2"/><path d="M1165 874.3H1180.2L1172.6 882.6Z" fill="#111"/>
<rect x="1356" y="911" width="2" height="2" fill="#bdbdbd"/><rect x="1356" y="908" width="2" height="2" fill="#bdbdbd"/><rect x="1356" y="905" width="2" height="2" fill="#bdbdbd"/><rect x="1356" y="902" width="2" height="2" fill="#bdbdbd"/><rect x="1353" y="911" width="2" height="2" fill="#bdbdbd"/><rect x="1353" y="908" width="2" height="2" fill="#bdbdbd"/><rect x="1353" y="905" width="2" height="2" fill="#bdbdbd"/><rect x="1350" y="911" width="2" height="2" fill="#bdbdbd"/><rect x="1350" y="908" width="2" height="2" fill="#bdbdbd"/><rect x="1347" y="911" width="2" height="2" fill="#bdbdbd"/>
<rect x="1050.2" y="856.2" width="139.8" height="43.6" rx="5" fill="none" stroke="#000" stroke-width="4.2"/>
<path d="M1114 931V916" stroke="#000" stroke-width="4.2"/><path d="M1114 903.5L1122.3 925.5C1117 921.3 1111 921.3 1105.7 925.5Z" fill="#000"/>
<path d="M937 495.2H872" stroke="#000" stroke-width="4.2"/><path d="M855.3 495.2L879.5 486.8C875.3 492 875.3 498.4 879.5 503.6Z" fill="#000"/></svg>
<span class="t" style="left:465.00px;top:220.76px;font-size:18px;color:#000;transform:scaleX(0.9996);">Insert Audio</span>
<span class="t" style="left:678.50px;top:278.30px;font-size:15px;color:#555;transform:scaleX(0.8408);">«</span>
<span class="t" style="left:698.00px;top:278.76px;font-size:18px;color:#1b1b1b;transform:scaleX(0.9887);">Downloads</span>
<span class="t" style="left:820.00px;top:278.76px;font-size:18px;color:#1b1b1b;transform:scaleX(0.9579);">Music</span>
<span class="t" style="left:1107.00px;top:279.76px;font-size:18px;color:#687282;transform:scaleX(0.9443);">Search Music</span>
<span class="t" style="left:452.00px;top:340.76px;font-size:18px;color:#1F3B63;transform:scaleX(0.9715);">Organize</span>
<span class="t" style="left:585.00px;top:340.76px;font-size:18px;color:#1F3B63;transform:scaleX(0.9995);">New folder</span>
<span class="t" style="left:498.00px;top:405.76px;font-size:18px;color:#141414;transform:scaleX(0.8908);">This PC</span>
<span class="t" style="left:511.00px;top:452.76px;font-size:18px;color:#141414;transform:scaleX(0.9991);">Desktop</span>
<span class="t" style="left:511.00px;top:500.76px;font-size:18px;color:#141414;transform:scaleX(0.9772);">Documents</span>
<span class="t" style="left:511.00px;top:548.76px;font-size:18px;color:#141414;transform:scaleX(0.9887);">Downloads</span>
<span class="t" style="left:511.00px;top:596.76px;font-size:18px;color:#141414;transform:scaleX(0.9579);">Music</span>
<span class="t" style="left:511.00px;top:644.76px;font-size:18px;color:#141414;transform:scaleX(0.9080);">Pictures</span>
<span class="t" style="left:510.00px;top:692.76px;font-size:18px;color:#141414;transform:scaleX(0.9686);">Videos</span>
<span class="t" style="left:511.00px;top:740.76px;font-size:18px;color:#141414;transform:scaleX(0.9153);">Local Disk (C:)</span>
<span class="t" style="left:704.00px;top:534.76px;font-size:18px;color:#111;transform:scaleX(0.9759);">Mercy Chinwo -</span>
<span class="t" style="left:720.00px;top:559.76px;font-size:18px;color:#111;transform:scaleX(0.9717);">Confidence</span>
<span class="t" style="left:697.50px;top:584.76px;font-size:18px;color:#111;transform:scaleX(0.9640);">(NetNaija.com).m</span>
<span class="t" style="left:755.00px;top:609.76px;font-size:18px;color:#111;transform:scaleX(0.9510);">p3</span>
<span class="t" style="left:610.00px;top:824.76px;font-size:18px;color:#111;transform:scaleX(0.9279);">File name:</span>
<span class="t" style="left:701.00px;top:825.76px;font-size:18px;color:#111;transform:scaleX(0.9712);">Mercy Chinwo - Confidence (NetNaija.c</span>
<div style="left:1056px;top:818px;width:250.5px;height:30px;overflow:hidden"><span class="t" style="left:2.00px;top:6.76px;font-size:18px;color:#111;transform:scaleX(0.9623);">Audio Files (*.adts;*.adt;*.aac;*.aif</span></div>
<span class="t" style="left:957.00px;top:869.76px;font-size:18px;color:#111;transform:scaleX(0.9755);">Tools</span>
<span class="t" style="left:1085.00px;top:869.76px;font-size:18px;color:#111;transform:scaleX(0.9778);">Insert</span>
<span class="t" style="left:1244.00px;top:869.76px;font-size:18px;color:#111;transform:scaleX(0.9096);">Cancel</span>
<span class="t" style="left:946.50px;top:477.64px;font-size:33.5px;color:#000;font-weight:700;transform:scaleX(1.0379);-webkit-text-stroke:0.2px #000;">Select the audio file</span>
<span class="t" style="left:1020.50px;top:934.89px;font-size:27.3px;color:#000;font-weight:700;transform:scaleX(1.1425);-webkit-text-stroke:0.2px #000;">Insert Button</span>
<svg id="cover" style="left:692px;top:386px" width="144" height="144" viewBox="0 0 144 144"><defs>
<radialGradient id="cbg" cx="0.68" cy="0.58" r="0.7"><stop offset="0" stop-color="#B57443"/><stop offset=".5" stop-color="#A05F32"/><stop offset="1" stop-color="#7F4421"/></radialGradient>
<linearGradient id="cskin" x1="0.1" y1="0" x2="0.9" y2="1"><stop offset="0" stop-color="#D9A172"/><stop offset=".45" stop-color="#C68858"/><stop offset="1" stop-color="#A9693D"/></linearGradient>
<linearGradient id="chat" x1="0" y1="0" x2="1" y2="1"><stop offset="0" stop-color="#BB957E"/><stop offset=".6" stop-color="#AC856D"/><stop offset="1" stop-color="#94705A"/></linearGradient>
<linearGradient id="cpur" x1="0" y1="0" x2="1" y2="1"><stop offset="0" stop-color="#D78CDB"/><stop offset="1" stop-color="#AE60C3"/></linearGradient>
<clipPath id="cclip"><rect x="0" y="0" width="144" height="144"/></clipPath>
<filter id="cblur" x="-20%" y="-20%" width="140%" height="140%"><feGaussianBlur stdDeviation="1.6"/></filter>
<filter id="cblur3" x="-5%" y="-5%" width="110%" height="110%"><feGaussianBlur stdDeviation="0.45"/></filter>
<filter id="cblur2" x="-20%" y="-20%" width="140%" height="140%"><feGaussianBlur stdDeviation="0.5"/></filter>
</defs>
<g clip-path="url(#cclip)"><g filter="url(#cblur3)">
<rect width="144" height="144" fill="url(#cbg)"/>
<path d="M80 114C90 116 98 122 105 130C108 134 110 139 112 144H84Z" fill="url(#cpur)"/>
<path d="M0 122L21.7 116C25 124 26.5 134 24.5 144H0Z" fill="url(#cpur)"/><path d="M21.7 116L36 108C38.5 120 40.5 132 41 144H24.5C26.5 134 25 124 21.7 116Z" fill="#1d1316"/>
<path d="M64 92L80.5 93C83 100 86 108 90 116C95 126 100 136 104 144H66Z" fill="#1c1315"/>
<path d="M40 88L70 94C68 100 66 104 64 110L40 112Z" fill="#9A5B33"/>
<path d="M42 90C50 98 60 100 68 96C67 100 66 104 64 108C54 108 46 102 42 90Z" fill="#6f3d20" opacity=".6"/>
<path d="M36 106C44 110 56 110 64 104C68 110 70 118 69 128C68 134 68 140 68 144H40C40 132 38 118 36 106Z" fill="#AE6A3B"/>
<path d="M40 110C47 113 56 112 62 108L64 118C56 122 46 120 41 116Z" fill="#C07C48" opacity=".7"/>
<path d="M55 102C58 108 62 114 66 119L64 120C60 114 56 108 53.5 103Z" fill="#C77AD0"/>
<path d="M0 39C8 29 18 23 30 20C28 28 27 37 28.5 46C29 56 30 66 34 78C37 86 41 92 46 96C44 102 40 106 36 108L21.7 116L0 122.6Z" fill="#1d1316"/>
<path d="M4 50C8 70 8 96 16 116" stroke="#3a2528" stroke-width="1.6" fill="none" opacity=".7" filter="url(#cblur2)"/>
<path d="M29.5 18C40 8 58 7 70 13C78 18 84 28 85 35C84.5 38 83 40 83 43C83 46 82.5 48 81.5 51C81 54 80.8 57 80.3 60C79.5 63 78 66 77 68C76 71 75.5 74 75 77C75 80 75 84 74 88C72 93 70 96 66 96C58 97 50 96 45 94.5C40 90 36 84 34 78C30 66 29 56 28.5 46C27 36 28 26 29.5 18Z" fill="url(#cskin)" stroke="#5f3219" stroke-opacity=".55" stroke-width="1.1"/>
<ellipse cx="50" cy="55" rx="13" ry="11" fill="#E5B080" opacity=".6" filter="url(#cblur)"/>
<ellipse cx="56" cy="22" rx="14" ry="6" fill="#E2AA7A" opacity=".55" filter="url(#cblur)"/>
<path d="M33 72C38 84 46 92 56 96H46C40 90 36 84 33 72Z" fill="#7a4425" opacity=".5" filter="url(#cblur2)"/>
<path d="M78 40C80 48 80 56 77 66C80 58 83 48 83 42Z" fill="#7a4425" opacity=".45" filter="url(#cblur2)"/>
<path d="M34.8 33.5C40 28.5 50 26.5 60.4 30.2L60 32.4C51 30 42 31 35.5 35Z" fill="#241410"/><path d="M66.6 32.6C71 30.4 76 31.2 79.4 34.6L78.6 35.6C75 33.4 71 33 67 34.4Z" fill="#241410"/>
<path d="M41.5 41.2C45.5 37.4 51.5 37.2 56 41C52 43.8 46 44 41.5 41.2Z" fill="#1a0f0d"/><path d="M40.5 40.5C45 36.5 52 36.2 57.2 40.2" stroke="#1a0f0d" stroke-width="1" fill="none"/><circle cx="49.5" cy="40.6" r="1.9" fill="#000"/><circle cx="50.3" cy="39.9" r=".6" fill="#d8c0b0"/>
<path d="M71 41.2C73.6 38.2 77.6 38.2 80.4 41C77.6 43.4 74 43.4 71 41.2Z" fill="#1a0f0d"/><path d="M70.4 40.6C73.5 37.4 78 37.4 81.2 40.4" stroke="#1a0f0d" stroke-width="1" fill="none"/>
<path d="M66 43C67 49 68 53 72 56.5C74 58.5 74 60.5 71.5 61.2C68 62 64 61.5 62 59C64 56 65.5 50 66 43Z" fill="#A9683E" opacity=".75"/><ellipse cx="68.6" cy="60.2" rx="2.2" ry="1.1" fill="#4d2616"/><path d="M62 58C62.5 60.5 64.5 61.8 67 61.8" stroke="#7a4425" stroke-width=".8" fill="none"/>
<path d="M53.4 73C58 70.6 62 71.4 65 72.2C68 71 72 70.8 75 72.4C72 78.5 66 81.4 60.5 80.6C57.5 80 55 77.5 53.4 73Z" fill="#B8604C"/><path d="M53.4 73C60 74.8 68 74.6 75 72.4" stroke="#5e2a20" stroke-width="1" fill="none"/><path d="M58 77.2C62 79 67 78.4 71 76" stroke="#D88A78" stroke-width="1" fill="none" opacity=".8"/>
<path d="M0 0H77C82 5 86 12 87.5 20C88.5 25 87.5 30 85 35C82 28 77 21 69 17C60 13 46 12.5 38 15.5C33 17.5 30 20 28.5 22C18 24 8 30 0 40Z" fill="url(#chat)"/>
<path d="M28.5 22C34 16.5 46 13 58 14.5C70 16.5 80 24 85 35C80 29.5 72 22 60 19C48 17 36 18.5 28.5 22Z" fill="#7b5845" opacity=".35" filter="url(#cblur2)"/>
<path d="M0 40C8 30 18 24 28.5 22C20 27 8 36 2 45L0 45Z" fill="#7b5845" opacity=".5"/>
</g></g>
<text transform="translate(133.4 139.6) rotate(-90)" font-family="Liberation Serif, serif" font-size="26" fill="#F0D5B8" textLength="134.5" lengthAdjust="spacingAndGlyphs">CONFIDENCE</text>
<text x="10" y="135.8" font-family="Liberation Serif, serif" font-size="8.3" fill="#E8CBA6" textLength="73.5" lengthAdjust="spacingAndGlyphs">MERCY CHINWO</text>
<g transform="translate(21.5 121) rotate(-42)"><text x="1" y="1.3" font-family="Liberation Sans, sans-serif" font-weight="700" font-size="15.5" fill="#3b2a22" opacity=".4" textLength="143" lengthAdjust="spacingAndGlyphs">NETNAIJA.COM</text><text x="0" y="0" font-family="Liberation Sans, sans-serif" font-weight="700" font-size="15.5" fill="#E6DAD3" opacity=".78" textLength="143" lengthAdjust="spacingAndGlyphs">NETNAIJA.COM</text></g></svg>
<div style="left:2px;top:973px;width:1784px;height:1px;background:#c9c9c9"></div>
<div style="left:1237px;top:974px;width:60px;height:32px;background:#D9D9D9"></div>
<span class="t" style="left:18.00px;top:982.46px;font-size:16px;color:#3a3a3a;transform:scaleX(0.9615);">Slide 1 of 1</span>
<span class="t" style="left:170.00px;top:982.46px;font-size:16px;color:#3a3a3a;transform:scaleX(0.9726);">English (Nigeria)</span>
<span class="t" style="left:335.00px;top:982.46px;font-size:16px;color:#3a3a3a;transform:scaleX(0.9646);">Accessibility: Good to go</span>
<span class="t" style="left:1039.00px;top:982.46px;font-size:16px;color:#3a3a3a;transform:scaleX(0.9579);">Notes</span>
<span class="t" style="left:1134.00px;top:982.46px;font-size:16px;color:#3a3a3a;transform:scaleX(0.9695);">Comments</span>
<span class="t" style="left:1692.00px;top:982.46px;font-size:16px;color:#3a3a3a;transform:scaleX(0.9062);">59%</span>
<svg id="status-icons" style="left:0;top:960px" width="1788" height="48" viewBox="0 960 1788 48"><path d="M135 983.3V997.5M135 983.3C132 981.6 128 981.6 124.8 982.8V997C128 995.8 132 995.8 135 997.5M135 983.3C138 981.6 142 981.6 145.2 982.8V989" fill="none" stroke="#3a3a3a" stroke-width="1.4" stroke-linejoin="round" stroke-linecap="round"/><path d="M137.5 995L140.8 998.8L146.6 991.5" fill="none" stroke="#3a3a3a" stroke-width="1.5" stroke-linecap="round" stroke-linejoin="round"/>
<circle cx="318.5" cy="983.3" r="2.5" fill="none" stroke="#3a3a3a" stroke-width="1.3"/><path d="M309 985.5C312 987.8 315 988.6 318.5 988.6C322 988.6 325 987.8 328 985.5M316.2 988.6V993.5L312.5 1000.2M320.8 988.6V992" fill="none" stroke="#3a3a3a" stroke-width="1.4" stroke-linecap="round" stroke-linejoin="round"/><path d="M319.5 996.3L322.8 999.8L329.6 992.3" fill="none" stroke="#3a3a3a" stroke-width="1.5" stroke-linecap="round" stroke-linejoin="round"/>
<path d="M1019.5 984.3L1024 980.2L1028.5 984.3" fill="none" stroke="#3a3a3a" stroke-width="1.4" stroke-linecap="round" stroke-linejoin="round"/><path d="M1012.5 989H1035.5M1012.5 994H1035.5M1012.5 999H1035.5" stroke="#3a3a3a" stroke-width="1.3"/>
<path d="M1108.7 981.2H1128.8V994.8H1117.8L1112.8 999.6V994.8H1108.7Z" fill="none" stroke="#3a3a3a" stroke-width="1.4" stroke-linejoin="round"/>
<path d="M1257.6 981.6H1277.4V997.6H1257.6Z M1261.3 981.6V997.6 M1261.3 993.6H1277.4" fill="none" stroke="#3a3a3a" stroke-width="1.5"/><rect x="1265" y="984.8" width="8.8" height="5" fill="none" stroke="#3a3a3a" stroke-width="1.4"/>
<rect x="1317.2" y="982" width="8.3" height="6.3" fill="none" stroke="#3a3a3a" stroke-width="1.5"/><rect x="1317.2" y="991.6" width="8.3" height="6.3" fill="none" stroke="#3a3a3a" stroke-width="1.5"/><rect x="1329" y="982" width="8.3" height="6.3" fill="none" stroke="#3a3a3a" stroke-width="1.5"/><rect x="1329" y="991.6" width="8.3" height="6.3" fill="none" stroke="#3a3a3a" stroke-width="1.5"/>
<path d="M1386 982.5V999.3M1386 982.5C1383 980.8 1379.5 980.6 1376.7 981.3V997.8C1379.5 997.2 1383 997.5 1386 999.3C1389 997.5 1392.5 997.2 1395.3 997.8V981.3C1392.5 980.6 1389 980.8 1386 982.5" fill="none" stroke="#3a3a3a" stroke-width="1.4" stroke-linejoin="round"/><path d="M1379.3 985.2H1383.4M1379.3 988.4H1383.4M1379.3 991.6H1383.4M1379.3 994.6H1383.4M1388.6 985.2H1392.7M1388.6 988.4H1392.7M1388.6 991.6H1392.7M1388.6 994.6H1392.7" stroke="#3a3a3a" stroke-width="1.1"/>
<path d="M1437 981H1456.5M1439.2 981V991.2H1454.3V981M1446.8 991.2V997.8M1441.5 998H1452M1443.6 985H1450" fill="none" stroke="#3a3a3a" stroke-width="1.5"/>
<path d="M1485.5 989.6H1496.5M1661 989.6H1672.5M1666.8 984V995.4" stroke="#555" stroke-width="1.2"/><path d="M1505 990H1653" stroke="#666" stroke-width="1.4"/><path d="M1579 985.4V994.6" stroke="#666" stroke-width="1.4"/><rect x="1543.2" y="981.3" width="8" height="17" fill="#666"/>
<rect x="1746.5" y="984" width="10.5" height="10.5" fill="none" stroke="#3a3a3a" stroke-width="1.5"/><path d="M1748.5 981.2L1751.8 978.2L1755 981.2M1748.5 997.3L1751.8 1000.3L1755 997.3M1743.8 986L1740.6 989.3L1743.8 992.5M1759.8 986L1763 989.3L1759.8 992.5" fill="none" stroke="#3a3a3a" stroke-width="1.4" stroke-linecap="round" stroke-linejoin="round"/></svg>
<div id="frame" style="left:0;top:0;width:1788px;height:1008px;box-sizing:border-box;border:2px solid #7f7f7f;pointer-events:none"></div>
</div>
</body></html>
